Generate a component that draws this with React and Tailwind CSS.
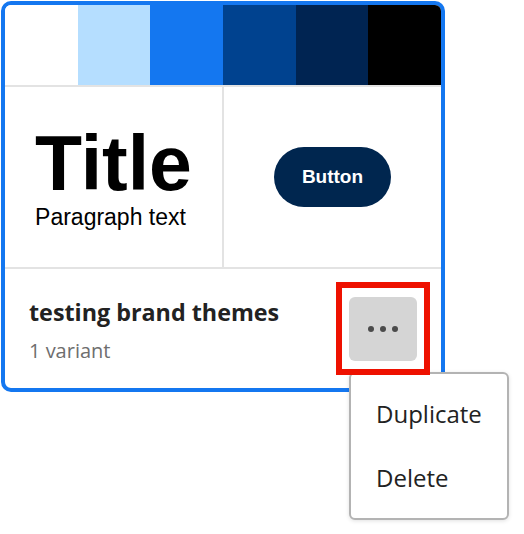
import React from "react";

const swatches = ["#FFFFFF", "#B5DEFF", "#1477F0", "#00428F", "#002452", "#000000"];

const ThemeCard = () => {
  return (
    <div className="ml-[1px] mt-[1px] w-[444px] h-[391px] border-4 border-[#1477F0] rounded-[10px] overflow-hidden flex flex-col bg-white">
      {/* colour strip */}
      <div className="grid grid-cols-6 h-[80px] shrink-0">
        {swatches.map((c) => (
          <div key={c} style={{ backgroundColor: c }} />
        ))}
      </div>
      <div className="h-[2px] bg-[#E3E3E3] shrink-0" />

      {/* preview */}
      <div className="grid grid-cols-[219px_1fr] h-[180px] shrink-0">
        <div className="border-r-2 border-[#E3E3E3] flex items-center justify-center">
          <div className="font-['Liberation_Sans',Arial,sans-serif] text-black">
            <div className="text-[77px] font-bold leading-none">Title</div>
            <div className="text-[23px] leading-none mt-[4px]">Paragraph text</div>
          </div>
        </div>
        <div className="flex items-center justify-center">
          <button className="w-[117px] h-[60px] rounded-full bg-[#00264F] text-white font-bold text-[19px] font-['Liberation_Sans',Arial,sans-serif]">
            Button
          </button>
        </div>
      </div>
      <div className="h-[2px] bg-[#E3E3E3] shrink-0" />

      {/* footer */}
      <div className="flex-1 flex items-center justify-between px-6 font-['Open_Sans',sans-serif]">
        <div className="mt-[3px]">
          <div className="text-[23.3px] font-bold leading-8 text-[#222222]">testing brand themes</div>
          <div className="text-[20px] leading-7 text-[#6E6E6E] mt-[9px]">1 variant</div>
        </div>
        <button className="w-[68px] h-[64px] rounded-md bg-[#D5D5D5] flex items-center justify-center gap-[5.7px]">
          <span className="w-[6px] h-[6px] rounded-full bg-[#4B4B4B]" />
          <span className="w-[6px] h-[6px] rounded-full bg-[#4B4B4B]" />
          <span className="w-[6px] h-[6px] rounded-full bg-[#4B4B4B]" />
        </button>
      </div>
    </div>
  );
};

export default function App() {
  return (
    <div className="relative w-[524px] h-[534px] bg-white overflow-hidden">
      <ThemeCard />

      {/* highlight around the actions button */}
      <div className="absolute left-[336px] top-[282px] w-[94px] h-[93px] border-[6px] border-[#EE1100] z-20" />

      {/* actions menu */}
      <div className="absolute left-[349px] top-[372px] w-[160px] h-[148px] border-2 border-[#B3B3B3] rounded-md bg-white py-2 z-10 shadow-[0_1px_4px_rgba(0,0,0,0.12)] font-['Open_Sans',sans-serif] text-[24px] text-[#222222]">
        <div className="px-[25px] py-4 leading-8">Duplicate</div>
        <div className="px-[25px] py-4 leading-8">Delete</div>
      </div>
    </div>
  );
}
